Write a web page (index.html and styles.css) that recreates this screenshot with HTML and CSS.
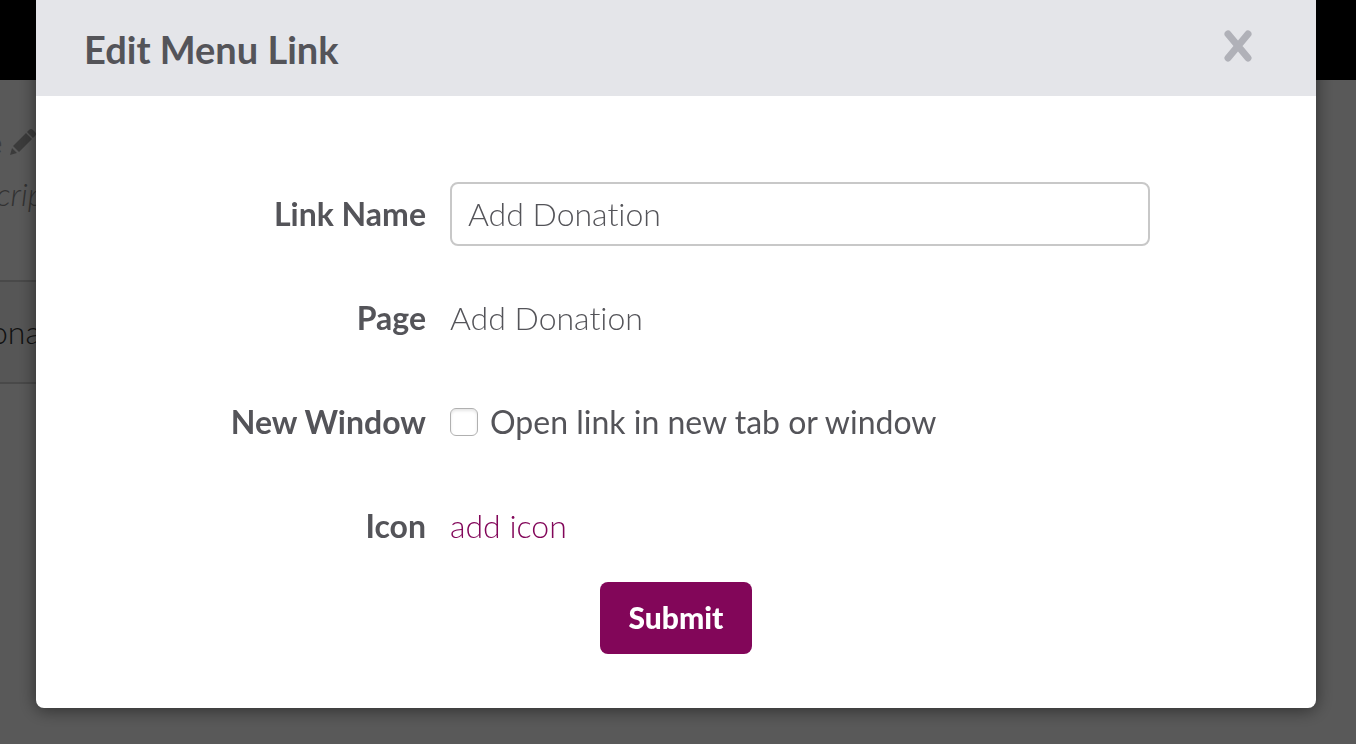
FILE: index.html
```html
<!DOCTYPE html>
<html lang="en">
<head>
	<meta charset="utf-8">
	<meta name="viewport" content="width=device-width, initial-scale=1">
	<title>Edit Menu Link</title>
	<link rel="stylesheet" href="styles.css">
</head>
<body>

<!-- Page under the dialog -->
<div class="top-bar"></div>
<div class="page">
	<div class="page-title">
		<span>e</span>
		<svg class="pencil" viewBox="0 0 26 26" aria-hidden="true">
			<path d="M0 26 L2 19 L7 24 Z M3 17 L16 4 L22 10 L9 23 Z M17 3 L19 1 Q21 -1 23 1 L25 3 Q27 5 25 7 L23 9 Z"/>
		</svg>
	</div>
	<div class="page-description">crip</div>
	<div class="page-item">ona</div>
</div>

<div class="backdrop">
	<div class="modal" role="dialog" aria-labelledby="modal-title">
		<div class="modal-header">
			<h1 id="modal-title">Edit Menu Link</h1>
			<button type="button" class="close" aria-label="Close">
				<svg viewBox="0 0 28 32" aria-hidden="true">
					<path d="M4 4 L24 28 M24 4 L4 28"/>
				</svg>
			</button>
		</div>
		<form class="modal-body">
			<div class="form-row">
				<label class="form-label" for="link-name">Link Name</label>
				<input type="text" id="link-name" class="text-input" value="Add Donation">
			</div>
			<div class="form-row">
				<span class="form-label">Page</span>
				<span class="form-value">Add Donation</span>
			</div>
			<div class="form-row">
				<span class="form-label">New Window</span>
				<label class="check-label" for="new-window">
					<input type="checkbox" id="new-window" class="check">
					Open link in new tab or window
				</label>
			</div>
			<div class="form-row">
				<span class="form-label">Icon</span>
				<span class="form-value"><a href="#">add icon</a></span>
			</div>
			<button type="submit" class="submit">Submit</button>
		</form>
	</div>
</div>

</body>
</html>
```

FILE: styles.css
```css
* {
	box-sizing: border-box;
}

body {
	margin: 0;
	min-height: 100vh;
	overflow: hidden;
	font-family: Lato, sans-serif;
	font-size: 32px;
	line-height: 40px;
	font-variant-ligatures: none;
	color: #545459;
	background: #fff;
}

/* Page under the dialog */
.top-bar {
	height: 80px;
	background: #000;
}

.page {
	width: 50%;
	margin-left: -14px;
	padding-top: 42px;
}

.page-title {
	display: flex;
	align-items: center;
	gap: 8px;
	font-weight: bold;
	color: #b0b0b0;
}

.page-title span {
	font-size: 30px;
}

.pencil {
	width: 26px;
	height: 26px;
	fill: #aaa;
}

.page-description {
	margin-top: 12px;
	padding-left: 10px;
	font-style: italic;
	font-weight: 300;
	color: #909090;
}

.page-item {
	margin-top: 66px;
	padding: 30px 4px;
	border-top: 2px solid #d0d0d0;
	border-bottom: 2px solid #d0d0d0;
	font-weight: 300;
	color: #333;
	background: #f6f6f6;
}

/* Dialog */
.backdrop {
	position: fixed;
	inset: 0;
	padding: 0 40px 0 36px;
	background: rgba(0, 0, 0, 0.65);
}

.modal {
	max-width: 1280px;
	margin: 0 auto;
	overflow: hidden;
	background: #fff;
	border-radius: 0 0 8px 8px;
	box-shadow: 0 2px 18px rgba(0, 0, 0, 0.5);
}

.modal-header {
	display: flex;
	align-items: center;
	justify-content: space-between;
	height: 96px;
	padding: 0 64px 4px 48px;
	background: #e4e5e9;
}

.modal-header h1 {
	margin: 0;
	padding-top: 6px;
	font-size: 38px;
	line-height: 48px;
	font-weight: bold;
}

.close {
	display: flex;
	padding: 0;
	border: none;
	background: none;
	cursor: pointer;
}

.close svg {
	width: 28px;
	height: 32px;
	fill: none;
	stroke: #b0b1b8;
	stroke-width: 7;
	stroke-linecap: round;
}

.modal-body {
	display: flex;
	flex-direction: column;
	gap: 40px;
	padding: 86px 0 54px;
}

.form-row {
	display: grid;
	grid-template-columns: 342px 1fr;
	column-gap: 24px;
	align-items: center;
	height: 64px;
	padding: 0 166px 0 48px;
}

.form-label {
	text-align: right;
	font-weight: bold;
}

.form-value {
	font-weight: 300;
}

.text-input {
	width: 100%;
	height: 64px;
	padding: 0 16px 2px;
	border: 2px solid #c8c8c8;
	border-radius: 8px;
	font: inherit;
	font-weight: 300;
	font-variant-ligatures: none;
	color: inherit;
	background: #fff;
}

.check-label {
	display: flex;
	align-items: center;
	gap: 12px;
}

.check {
	appearance: none;
	width: 28px;
	height: 28px;
	margin: 0;
	border: 1px solid #b0b0b0;
	border-radius: 6px;
	background: #fff;
	box-shadow: inset 0 2px 3px rgba(0, 0, 0, 0.1);
}

a {
	color: #820659;
	text-decoration: none;
}

.submit {
	align-self: center;
	min-width: 152px;
	height: 72px;
	margin-top: -16px;
	padding: 0 28px 2px;
	border: none;
	border-radius: 8px;
	font-family: inherit;
	font-size: 30px;
	font-weight: 900;
	color: #fff;
	background: #820659;
	cursor: pointer;
}
```
